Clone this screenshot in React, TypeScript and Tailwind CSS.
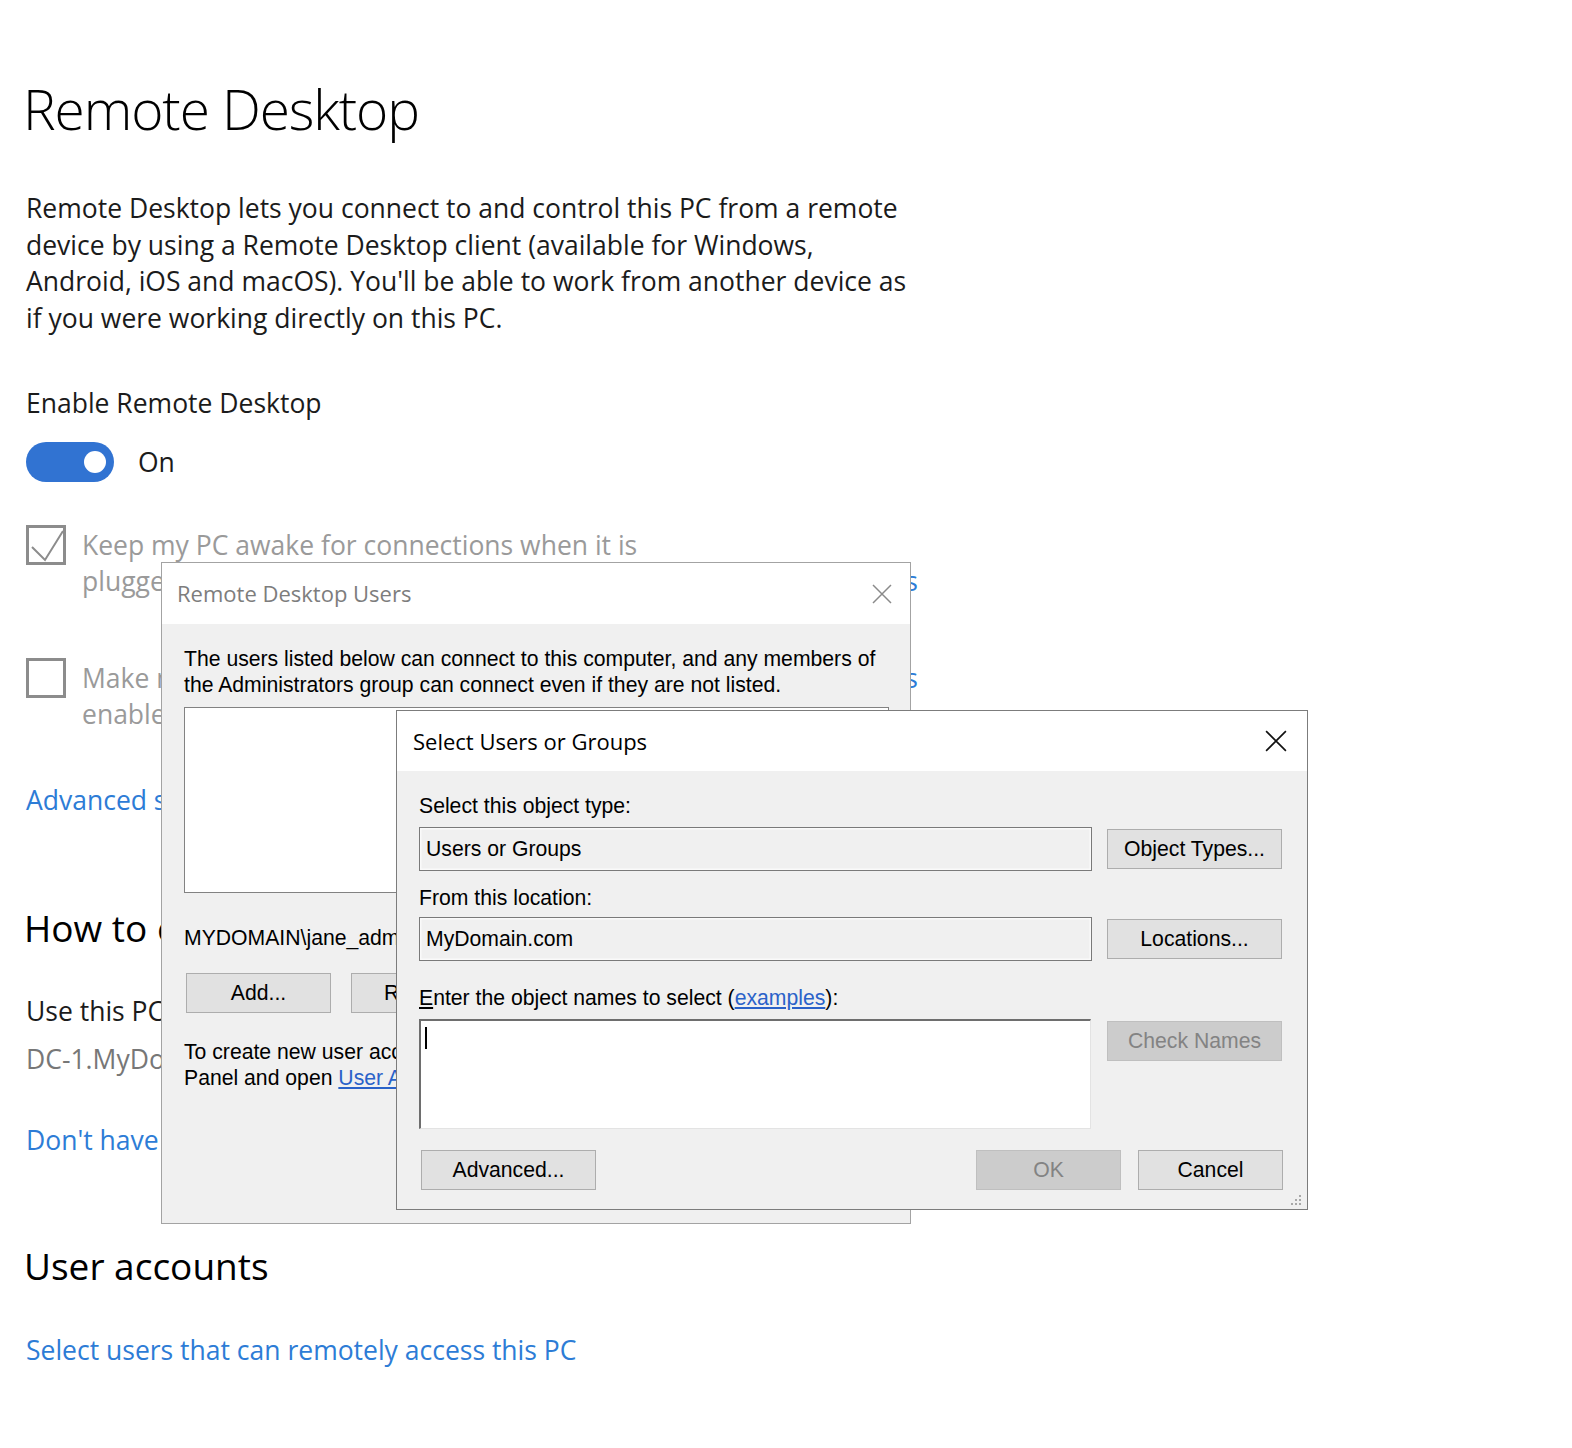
import React from "react";

function CloseIcon({ color, size }: { color: string; size: number }) {
  return (
    <svg width={size} height={size} viewBox="0 0 20 20" fill="none">
      <path d="M1 1 L19 19 M19 1 L1 19" stroke={color} strokeWidth="1.5" />
    </svg>
  );
}

function Checkbox({ checked }: { checked?: boolean }) {
  return (
    <div className="relative h-[40px] w-[40px] shrink-0 border-[3px] border-[#8c8c8c] bg-white">
      {checked && (
        <svg className="absolute -left-[3px] -top-[3px]" width="40" height="40" viewBox="0 0 40 40" fill="none">
          <path d="M6 22 L19 35 L37 6" stroke="#8c8c8c" strokeWidth="2" />
        </svg>
      )}
    </div>
  );
}

function WinButton({ label, w, disabled }: { label: React.ReactNode; w: string; disabled?: boolean }) {
  return (
    <div
      className={
        disabled
          ? `flex h-[40px] ${w} items-center justify-center border-[1.5px] border-[#bfbfbf] bg-[#cccccc] text-[#838383]`
          : `flex h-[40px] ${w} items-center justify-center border-[1.5px] border-[#adadad] bg-[#e1e1e1] text-black`
      }
    >
      {label}
    </div>
  );
}

export default function App() {
  return (
    <div className="relative h-[1448px] w-[1572px] overflow-hidden bg-white font-['Open_Sans',sans-serif] text-black">
      {/* Settings page */}
      <div className="flex flex-col pl-[26px] pt-[79px]">
        <h1 className="-ml-[3px] whitespace-nowrap text-[55px] font-light leading-[60px] tracking-[-0.02em]">
          Remote Desktop
        </h1>

        <p className="mt-[51px] whitespace-nowrap text-[26.5px] leading-[36.5px] text-[#1b1b1b]">
          Remote Desktop lets you connect to and control this PC from a remote
          <br />
          device by using a Remote Desktop client (available for Windows,
          <br />
          Android, iOS and macOS). You'll be able to work from another device as
          <br />
          if you were working directly on this PC.
        </p>

        <div className="mt-[49px] text-[26.5px] leading-[36px] text-[#1b1b1b]">Enable Remote Desktop</div>

        <div className="mt-[21px] flex items-center gap-[24px]">
          <div className="relative h-[40px] w-[88px] rounded-full bg-[#3173d2]">
            <div className="absolute left-[58px] top-[9px] h-[22px] w-[22px] rounded-full bg-white" />
          </div>
          <span className="text-[26.5px] leading-[36px] text-[#1b1b1b]">On</span>
        </div>

        <div className="mt-[43px] flex w-[892px]">
          <Checkbox checked />
          <p className="ml-[16px] mt-[2px] whitespace-nowrap text-[26.5px] leading-[36px] text-[#9a9a9a]">
            Keep my PC awake for connections when it is
            <br />
            plugged in
          </p>
          <a className="ml-auto self-end text-[26.5px] leading-[36px] text-[#2d7cd6]">Show settings</a>
        </div>

        <div className="mt-[59px] flex w-[892px]">
          <Checkbox />
          <p className="ml-[16px] mt-[2px] whitespace-nowrap text-[26.5px] leading-[36px] text-[#9a9a9a]">
            Make my PC discoverable on private networks to
            <br />
            enable automatic connection from a remote device
          </p>
          <a className="ml-auto mt-[2px] self-start text-[26.5px] leading-[36px] text-[#2d7cd6]">Show settings</a>
        </div>

        <a className="mt-[50px] text-[26.5px] leading-[36px] text-[#2d7cd6]">Advanced settings</a>

        <h2 className="-ml-[2px] mt-[86px] text-[37px] leading-[48px]">How to connect to this PC</h2>
        <div className="mt-[41px] text-[26.5px] leading-[36px] text-[#1b1b1b]">
          Use this PC name to connect from your remote device:
        </div>
        <div className="mt-[12px] text-[26.5px] leading-[36px] text-[#777777]">DC-1.MyDomain.com</div>
        <a className="mt-[45px] text-[26.5px] leading-[36px] text-[#2d7cd6]">
          Don't have a Remote Desktop client on your remote device?
        </a>

        <h2 className="-ml-[2px] mt-[84px] text-[37px] leading-[48px]">User accounts</h2>
        <a className="mt-[42px] text-[26.5px] leading-[36px] text-[#2d7cd6]">
          Select users that can remotely access this PC
        </a>
      </div>

      {/* Remote Desktop Users dialog */}
      <div className="absolute left-[161px] top-[562px] flex h-[662px] w-[750px] flex-col border-[1.5px] border-[#a3a3a3] bg-[#f0f0f0]">
        <div className="flex h-[61px] shrink-0 items-center justify-between bg-white pl-[15px] pr-[18px]">
          <span className="text-[22px] text-[#7d7d7d]">Remote Desktop Users</span>
          <CloseIcon color="#8a8a8a" size={20} />
        </div>
        <div className="flex flex-1 flex-col pl-[22px] pr-[20px] pt-[22px] font-['Liberation_Sans',Arial,sans-serif] text-[21.2px] leading-[26px]">
          <p>
            The users listed below can connect to this computer, and any members of
            <br />
            the Administrators group can connect even if they are not listed.
          </p>
          <div className="mt-[9px] h-[186px] w-[705px] border-[1.5px] border-[#828282] bg-white" />
          <p className="mt-[32px]">{"MYDOMAIN\\jane_admin already has access."}</p>
          <div className="ml-[2px] mt-[22px] flex gap-[20px]">
            <WinButton label="Add..." w="w-[145px]" />
            <WinButton label="Remove" w="w-[145px]" />
          </div>
          <p className="mt-[26px]">
            To create new user accounts or add users to other groups, go to Control
            <br />
            Panel and open <span className="text-[#2a62c9] underline">User Accounts</span>.
          </p>
          <div className="mb-[18px] mt-auto flex justify-end gap-[14px]">
            <WinButton label="OK" w="w-[145px]" />
            <WinButton label="Cancel" w="w-[145px]" />
          </div>
        </div>
      </div>

      {/* Select Users or Groups dialog */}
      <div className="absolute left-[396px] top-[710px] flex h-[500px] w-[912px] flex-col border-[1.5px] border-[#7c7c7c] bg-[#f0f0f0]">
        <div className="flex h-[60px] shrink-0 items-center justify-between bg-white pl-[16px] pr-[20px]">
          <span className="text-[22px] text-black">Select Users or Groups</span>
          <CloseIcon color="#111111" size={22} />
        </div>
        <div className="flex flex-1 flex-col pl-[22px] pr-[24px] pt-[23px] font-['Liberation_Sans',Arial,sans-serif] text-[21.2px] leading-[24px]">
          <div>Select this object type:</div>
          <div className="mt-[9px] flex items-center gap-[15px]">
            <div className="flex h-[44px] w-[673px] items-center border-[1.5px] border-[#7a7a7a] bg-[#f0f0f0] pl-[6px] shadow-[inset_0_0_0_1.5px_#fafafa]">
              Users or Groups
            </div>
            <WinButton label="Object Types..." w="w-[175px]" />
          </div>

          <div className="mt-[15px]">From this location:</div>
          <div className="mt-[7px] flex items-center gap-[15px]">
            <div className="flex h-[44px] w-[673px] items-center border-[1.5px] border-[#7a7a7a] bg-[#f0f0f0] pl-[6px] shadow-[inset_0_0_0_1.5px_#fafafa]">
              MyDomain.com
            </div>
            <WinButton label="Locations..." w="w-[175px]" />
          </div>

          <div className="mt-[25px]">
            <span className="underline">E</span>nter the object names to select (
            <span className="text-[#2a62c9] underline">examples</span>):
          </div>
          <div className="mt-[9px] flex items-start gap-[16px]">
            <div className="relative h-[110px] w-[672px] border-b-[1.5px] border-l-[2.5px] border-r-[1.5px] border-t-[2.5px] border-b-[#e3e3e3] border-l-[#6e6e6e] border-r-[#e3e3e3] border-t-[#6e6e6e] bg-white">
              <div className="absolute left-[4px] top-[6px] h-[22px] w-[1.5px] bg-black" />
            </div>
            <div className="mt-[2px]">
              <WinButton label="Check Names" w="w-[175px]" disabled />
            </div>
          </div>

          <div className="mt-[21px] flex items-center">
            <div className="ml-[2px]">
              <WinButton label="Advanced..." w="w-[175px]" />
            </div>
            <div className="ml-auto flex gap-[17px]">
              <WinButton label="OK" w="w-[145px]" disabled />
              <WinButton label="Cancel" w="w-[145px]" />
            </div>
          </div>
        </div>
        <svg className="absolute bottom-[3px] right-[5px]" width="12" height="12" viewBox="0 0 12 12">
          <rect x="9" y="1" width="2" height="2" fill="#a8a8a8" />
          <rect x="5" y="5" width="2" height="2" fill="#a8a8a8" />
          <rect x="9" y="5" width="2" height="2" fill="#a8a8a8" />
          <rect x="1" y="9" width="2" height="2" fill="#a8a8a8" />
          <rect x="5" y="9" width="2" height="2" fill="#a8a8a8" />
          <rect x="9" y="9" width="2" height="2" fill="#a8a8a8" />
        </svg>
      </div>
    </div>
  );
}
